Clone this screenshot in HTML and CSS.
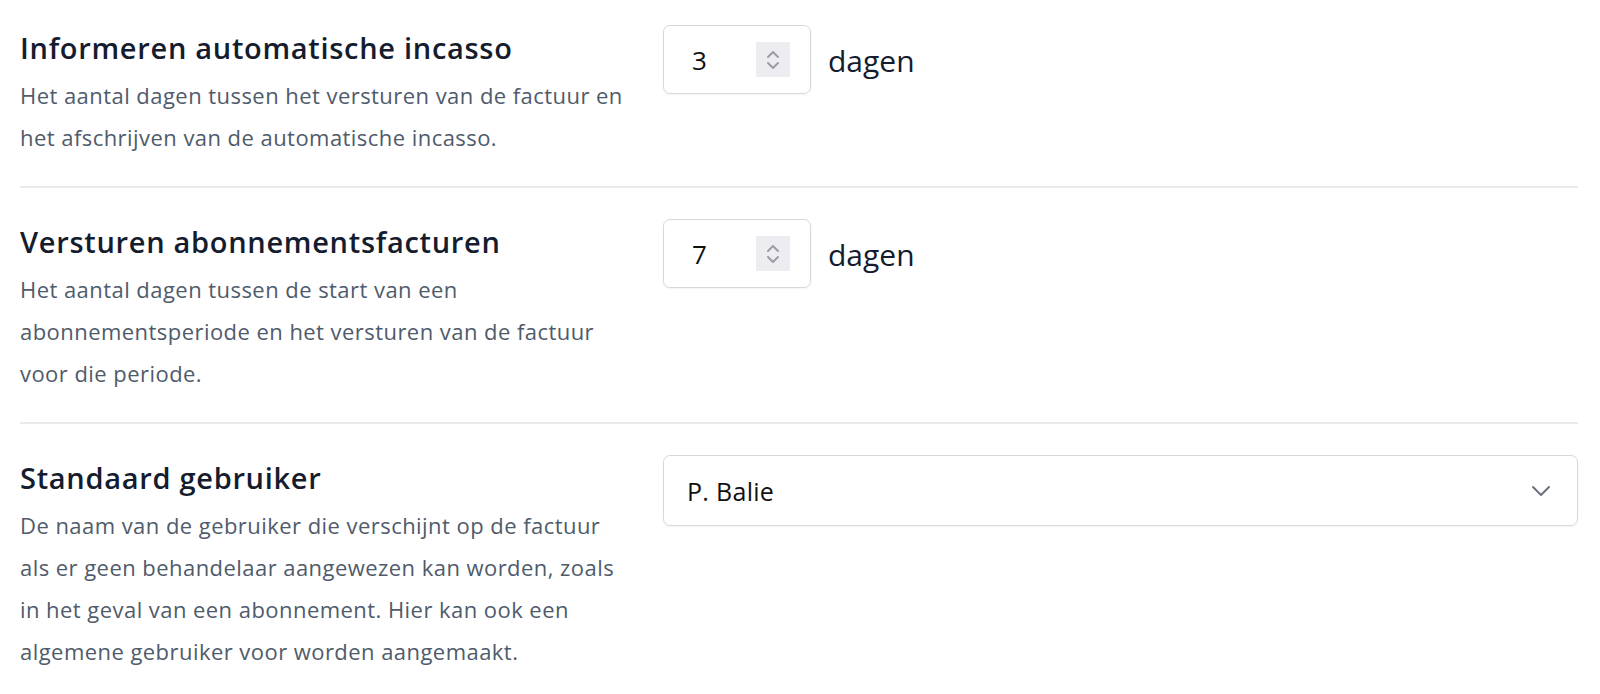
FILE: index.html
```html
<!DOCTYPE html>
<html lang="nl">
<head>
    <meta charset="UTF-8">
    <meta name="viewport" content="width=device-width, initial-scale=1.0">
    <title>Instellingen facturatie</title>
    <link rel="stylesheet" href="styles.css">
</head>
<body>
    <div class="settings">
        <div class="setting-row">
            <div class="setting-info">
                <h2>Informeren automatische incasso</h2>
                <p>Het aantal dagen tussen het versturen van de factuur en het afschrijven van de automatische incasso.</p>
            </div>
            <div class="setting-field">
                <div class="number-box">
                    <input type="text" class="number-input" value="3">
                    <span class="spinner">
                        <svg width="16" height="24" viewBox="0 0 16 24" fill="none" stroke="#9d9ca7" stroke-width="2" stroke-linecap="round" stroke-linejoin="round">
                            <path d="M3 9l5-5 5 5"/>
                            <path d="M3 15l5 5 5-5"/>
                        </svg>
                    </span>
                </div>
                <span class="unit">dagen</span>
            </div>
        </div>

        <div class="setting-row">
            <div class="setting-info">
                <h2>Versturen abonnementsfacturen</h2>
                <p>Het aantal dagen tussen de start van een abonnementsperiode en het versturen van de factuur voor die periode.</p>
            </div>
            <div class="setting-field">
                <div class="number-box">
                    <input type="text" class="number-input" value="7">
                    <span class="spinner">
                        <svg width="16" height="24" viewBox="0 0 16 24" fill="none" stroke="#9d9ca7" stroke-width="2" stroke-linecap="round" stroke-linejoin="round">
                            <path d="M3 9l5-5 5 5"/>
                            <path d="M3 15l5 5 5-5"/>
                        </svg>
                    </span>
                </div>
                <span class="unit">dagen</span>
            </div>
        </div>

        <div class="setting-row">
            <div class="setting-info">
                <h2>Standaard gebruiker</h2>
                <p>De naam van de gebruiker die verschijnt op de factuur als er geen behandelaar aangewezen kan worden, zoals in het geval van een abonnement. Hier kan ook een algemene gebruiker voor worden aangemaakt.</p>
            </div>
            <div class="setting-field">
                <div class="select-box">
                    <span class="select-value">P. Balie</span>
                    <svg width="20" height="12" viewBox="0 0 20 12" fill="none" stroke="#6b7280" stroke-width="2" stroke-linecap="round" stroke-linejoin="round">
                        <path d="M2 2l8 8 8-8"/>
                    </svg>
                </div>
            </div>
        </div>
    </div>
</body>
</html>
```

FILE: styles.css
```css
body {
    margin: 0;
    padding: 0 22px 0 20px;
    font-family: "Open Sans", "Noto Sans", Arial, sans-serif;
    background-color: #ffffff;
    color: #141c2e;
}

.setting-row {
    display: grid;
    grid-template-columns: 608px 1fr;
    column-gap: 35px;
    padding: 31px 0 28px;
    border-bottom: 2px solid #e9eaee;
}

.setting-row:first-child {
    padding-top: 25px;
}

.setting-row:last-child {
    border-bottom: none;
}

.setting-info h2 {
    margin: 0;
    font-size: 29px;
    font-weight: 600;
    letter-spacing: 0.7px;
    line-height: 46px;
    color: #141c2e;
}

.setting-info p {
    margin: 3px 0 0;
    font-size: 22px;
    letter-spacing: 0.45px;
    line-height: 42px;
    color: #4f5b6b;
}

.setting-field {
    display: flex;
    align-items: flex-start;
}

.number-box {
    display: flex;
    align-items: center;
    width: 148px;
    height: 69px;
    border: 1px solid #d6d8de;
    border-radius: 7px;
    box-shadow: 0 1px 2px rgba(0, 0, 0, 0.05);
    box-sizing: border-box;
}

.number-input {
    width: 72px;
    margin-left: 28px;
    border: none;
    outline: none;
    padding: 0;
    font-family: "Open Sans", "Noto Sans", Arial, sans-serif;
    font-size: 26px;
    color: #111111;
    background: transparent;
}

.spinner {
    display: flex;
    align-items: center;
    justify-content: center;
    width: 34px;
    height: 35px;
    margin-left: -8px;
    background-color: #ececf1;
}

.unit {
    margin-left: 17px;
    font-size: 30px;
    line-height: 71px;
    color: #141c2e;
}

.select-box {
    display: flex;
    align-items: center;
    justify-content: space-between;
    width: 100%;
    height: 71px;
    padding: 0 26px 0 23px;
    border: 1px solid #d6d8de;
    border-radius: 7px;
    box-shadow: 0 1px 2px rgba(0, 0, 0, 0.05);
    box-sizing: border-box;
}

.select-value {
    font-size: 25px;
    letter-spacing: 0.3px;
    color: #111111;
}
```
